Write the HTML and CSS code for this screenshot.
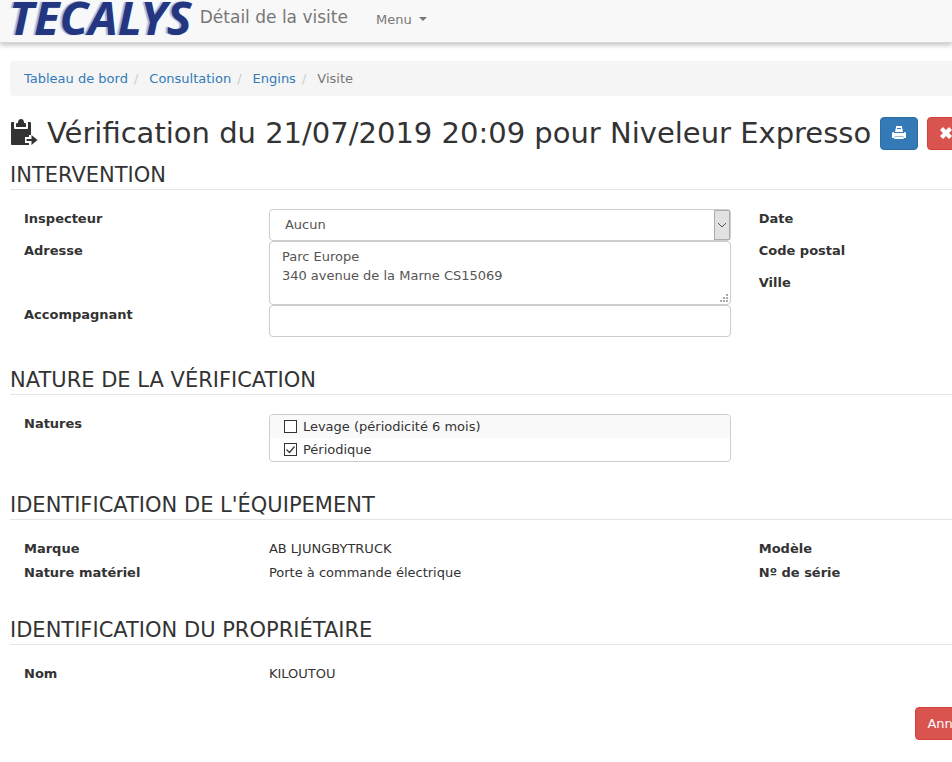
FILE: index.html
```
<!DOCTYPE html>
<html lang="fr">
<head>
    <meta charset="UTF-8">
    <meta name="viewport" content="width=device-width, initial-scale=1.0">
    <title>Tecalys - Détail de la visite</title>
    <link rel="stylesheet" href="styles.css">
</head>
<body>
    <nav class="navbar">
        <a class="logo" href="#">TECALYS</a>
        <span class="navbar-title">Détail de la visite</span>
        <button type="button" class="menu-toggle">Menu <span class="caret"></span></button>
    </nav>

    <main class="page">
        <ol class="breadcrumb">
            <li><a href="#">Tableau de bord</a></li>
            <li><a href="#">Consultation</a></li>
            <li><a href="#">Engins</a></li>
            <li>Visite</li>
        </ol>

        <header class="page-header">
            <svg class="icon-visit" viewBox="0 0 28 28" aria-hidden="true">
                <path fill="#333" d="M2 3h2v6q0 1 1 1h12q1 0 1-1V3h2q1 0 1 1v12h-2v2h-4v6h4v2H2q-1 0-1-1V4q0-1 1-1z"/>
                <path fill="#333" d="M6 8V5q0-1 1-1h1q0-4 3-4t3 4h1q1 0 1 1v3z"/>
                <path fill="#333" d="M16.500 20h5v-4l6 5-6 5v-4h-5z"/>
            </svg>
            <h1>Vérification du 21/07/2019 20:09 pour Niveleur Expresso</h1>
            <button type="button" class="btn btn-primary" aria-label="Imprimer">
                <svg class="icon" viewBox="0 0 14 14" aria-hidden="true">
                    <path fill="#fff" fill-rule="evenodd" d="M4 0h6v1l1 5H3l1-5zM1 6h1v1h10V6h1l1 1v5h-2l-1-2H3l-1 2H0V7zM3 10.500h8l1 2.500H2zM5 2h4v1H5z"/>
                </svg>
            </button>
            <button type="button" class="btn btn-danger" aria-label="Supprimer">
                <svg class="icon" viewBox="0 0 14 14" aria-hidden="true">
                    <path fill="#fff" d="M4 1l3 3 3-3 3 3-3 3 3 3-3 3-3-3-3 3-3-3 3-3-3-3z"/>
                </svg>
            </button>
        </header>

        <section>
            <h2>INTERVENTION</h2>
            <div class="form-grid">
                <label class="c1" for="inspecteur">Inspecteur</label>
                <div class="field">
                    <select id="inspecteur" class="form-control">
                        <option>Aucun</option>
                    </select>
                    <span class="select-arrow">
                        <svg viewBox="0 0 8 5" aria-hidden="true"><path fill="none" stroke="#555" d="M0 0l4 4 4-4"/></svg>
                    </span>
                </div>
                <span class="c3 term">Date</span>

                <label class="c1" for="adresse">Adresse</label>
                <div class="field tall">
                    <textarea id="adresse" class="form-control">Parc Europe
340 avenue de la Marne CS15069</textarea>
                    <svg class="grip" viewBox="0 0 8 8" aria-hidden="true">
                        <path fill="#aaa" d="M6 0h2v2H6zM3 3h2v2H3zM6 3h2v2H6zM0 6h2v2H0zM3 6h2v2H3zM6 6h2v2H6z"/>
                    </svg>
                </div>
                <span class="c3 term">Code postal</span>
                <span class="c3 term">Ville</span>

                <label class="c1" for="accompagnant">Accompagnant</label>
                <div class="field">
                    <input type="text" id="accompagnant" class="form-control">
                </div>
            </div>
        </section>

        <section>
            <h2>NATURE DE LA VÉRIFICATION</h2>
            <div class="form-grid natures">
                <span class="c1 term">Natures</span>
                <div class="field check-list">
                    <label><input type="checkbox"> Levage (périodicité 6 mois)</label>
                    <label><input type="checkbox" checked> Périodique</label>
                </div>
            </div>
        </section>

        <section>
            <h2>IDENTIFICATION DE L'ÉQUIPEMENT</h2>
            <div class="form-grid infos">
                <span class="c1 term">Marque</span>
                <span class="field">AB LJUNGBYTRUCK</span>
                <span class="c3 term">Modèle</span>
                <span class="c1 term">Nature matériel</span>
                <span class="field">Porte à commande électrique</span>
                <span class="c3 term">Nº de série</span>
            </div>
        </section>

        <section>
            <h2>IDENTIFICATION DU PROPRIÉTAIRE</h2>
            <div class="form-grid infos">
                <span class="c1 term">Nom</span>
                <span class="field">KILOUTOU</span>
            </div>
        </section>

        <div class="actions">
            <button type="button" class="btn btn-danger">Annuler</button>
        </div>
    </main>
</body>
</html>
```
FILE: styles.css
```
* {
    box-sizing: border-box;
}
body {
    margin: 0;
    font-family: Verdana, "DejaVu Sans", sans-serif;
    font-size: 13px;
    line-height: 19px;
    color: #333;
    background: #fff;
    overflow-x: hidden;
}
a {
    color: #337ab7;
    text-decoration: none;
}
.navbar {
    display: flex;
    align-items: center;
    height: 43px;
    padding: 0 9px 4px;
    background: #f8f8f8;
    border-bottom: 1px solid #d8d8d8;
    box-shadow: 0 2px 5px rgba(0,0,0,0.25);
    color: #777;
}
.logo {
    padding-bottom: 4px;
    font-family: "Noto Sans", sans-serif;
    font-size: 47px;
    font-weight: bold;
    font-style: italic;
    line-height: 34px;
    color: #24367f;
    text-shadow: -2px 0 1px #a9b3d9;
}
.navbar-title {
    margin-left: 8px;
    padding-bottom: 4px;
    font-size: 17px;
}
.menu-toggle {
    display: flex;
    align-items: center;
    gap: 7px;
    margin-left: 28px;
    padding: 0;
    border: 0;
    background: none;
    font: inherit;
    color: #777;
}
.caret {
    border-top: 4px solid #777;
    border-left: 4px solid transparent;
    border-right: 4px solid transparent;
}
.page {
    padding: 18px 0 20px 10px;
}
.breadcrumb {
    display: flex;
    margin: 0 0 20px;
    padding: 8px 14px;
    list-style: none;
    background: #f5f5f5;
    border-radius: 4px 0 0 4px;
    color: #777;
}
.breadcrumb li + li::before {
    content: "/";
    padding: 0 11px 0 6px;
    color: #ccc;
}
.page-header {
    display: flex;
    align-items: center;
    gap: 9px;
    margin-bottom: 12px;
    height: 34px;
}
.page-header h1 {
    margin: 0;
    font-size: 29px;
    font-weight: normal;
    line-height: 32px;
    white-space: nowrap;
}
.icon-visit {
    flex: none;
    width: 28px;
    height: 28px;
}
.btn {
    flex: none;
    height: 33px;
    padding: 0 11px;
    border: 1px solid;
    border-radius: 4px;
    font: inherit;
    color: #fff;
}
.btn-primary {
    background: #337ab7;
    border-color: #2e6da4;
}
.btn-danger {
    background: #d9534f;
    border-color: #d43f3a;
}
.icon {
    display: block;
    width: 14px;
    height: 14px;
}
h2 {
    margin: 30px 0 19px;
    border-bottom: 1px solid #e5e5e5;
    font-size: 21px;
    font-weight: normal;
    line-height: 27px;
}
.page-header + section h2 {
    margin-top: 0;
}
.form-grid {
    display: grid;
    grid-template-columns: 26fr 52fr 22fr;
    grid-auto-rows: 32px;
}
.form-grid > * {
    margin: 0 14px;
}
.infos {
    grid-auto-rows: 24px;
}
.natures {
    grid-auto-rows: auto;
}
.c1 {
    grid-column: 1;
}
.c3 {
    grid-column: 3;
}
.c1, .term {
    font-weight: bold;
}
.field {
    grid-column: 2;
    position: relative;
}
.tall {
    grid-row: span 2;
}
.form-control {
    display: block;
    width: 100%;
    height: 100%;
    padding: 5px 12px;
    border: 1px solid #ccc;
    border-radius: 4px;
    background: #fff;
    font: inherit;
    color: #555;
    resize: none;
    appearance: none;
}
select.form-control {
    padding: 4px 15px 6px;
}
.select-arrow {
    position: absolute;
    top: 1px;
    right: 1px;
    bottom: 1px;
    display: flex;
    align-items: center;
    justify-content: center;
    width: 16px;
    background: #e1e1e1;
    border: 1px solid #adadad;
    pointer-events: none;
}
.select-arrow svg {
    width: 8px;
    height: 5px;
}
.grip {
    position: absolute;
    right: 3px;
    bottom: 3px;
    width: 8px;
    height: 8px;
}
.check-list {
    border: 1px solid #ccc;
    border-radius: 4px;
    overflow: hidden;
}
.check-list label {
    display: flex;
    align-items: center;
    gap: 6px;
    height: 23px;
    padding-left: 14px;
}
.check-list label:first-child {
    background: #f9f9f9;
}
.check-list input {
    appearance: none;
    width: 13px;
    height: 13px;
    margin: 0;
    border: 1px solid #333;
    background: #fff;
}
.check-list input:checked {
    background: #fff url("data:image/svg+xml,%3Csvg xmlns='http://www.w3.org/2000/svg' viewBox='0 0 11 11'%3E%3Cpath fill='none' stroke='%23333' stroke-width='1.2' d='M1.5 5.5l3 3 5-6'/%3E%3C/svg%3E");
}
.actions {
    display: flex;
    justify-content: flex-end;
    margin: 19px -38px 0 0;
}
```
